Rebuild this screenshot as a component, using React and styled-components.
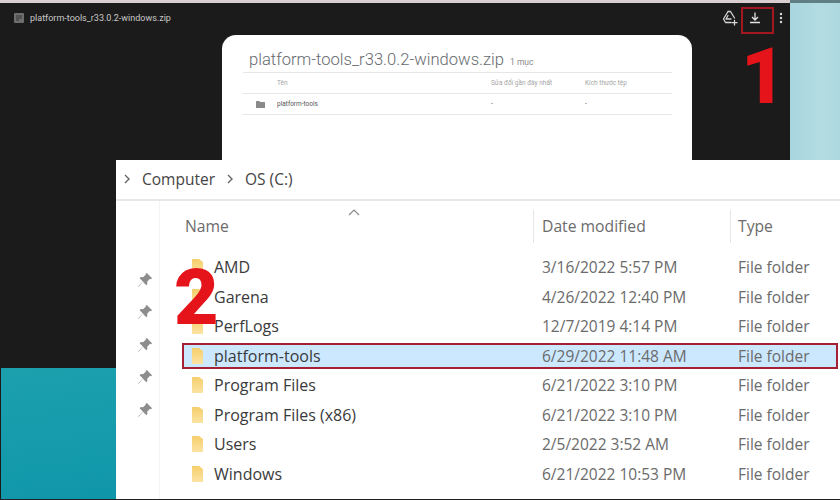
import React from 'react';
import styled, { createGlobalStyle } from 'styled-components';

const GlobalStyle = createGlobalStyle`
  html, body {
    margin: 0;
    padding: 0;
    background: #fff;
  }
`;

const Stage = styled.div`
  position: relative;
  width: 840px;
  height: 500px;
  overflow: hidden;
  display: grid;
  grid-template-columns: 790px 50px;
  grid-template-rows: 368px 131px;
  background: #222;
`;

const Viewer = styled.div`
  background: #1b1b1b;
  border-top: 3px solid #d9cfd0;
  box-sizing: border-box;
  font-family: Roboto, "Liberation Sans", sans-serif;
`;

const SideStrip = styled.div`
  height: 160px;
  box-sizing: border-box;
  border-top: 3px solid #5f7f85;
  background: linear-gradient(90deg, #a8d6df 0%, #b3dbe2 60%, #aed8df 100%);
`;

const Teal = styled.div`
  grid-column: 1 / span 2;
  border-left: 1px solid #1b1b1b;
  background: linear-gradient(172deg, #1ca0ae 0%, #1299aa 45%, #0a8ca6 100%);
`;

const TopBar = styled.div`
  height: 30px;
  display: flex;
  align-items: center;
  padding: 0 0 0 14px;
  gap: 6px;
`;

const FileName = styled.span`
  font-size: 9px;
  color: #c9c9c9;
  flex: 1;
`;

const BarIcons = styled.div`
  display: grid;
  grid-template-columns: 27px 30px 4px;
  align-items: center;
  padding-right: 7px;
`;

const PreviewCard = styled.div`
  width: 470px;
  height: 125px;
  margin: 2px 0 0 222px;
  box-sizing: border-box;
  padding: 15px 20px 0 21px;
  background: #fff;
  border-radius: 14px 14px 0 0;
`;

const PreviewTitle = styled.div`
  display: flex;
  align-items: baseline;
  gap: 6px;
  padding-left: 6px;
  height: 22px;
  font-size: 16.6px;
  font-weight: 300;
  color: #666a6e;
  white-space: nowrap;
`;

const ItemCount = styled.span`
  font-size: 8.5px;
  color: #8a8a8a;
  font-weight: 400;
`;

const PreviewRow = styled.div`
  display: grid;
  grid-template-columns: 34px 214px 94px 1fr;
  align-items: center;
  height: 20px;
  border-top: 1px solid #e6e6e6;
  font-size: 6.5px;
  color: ${(p) => (p.$head ? '#a5a5a5' : '#555')};
  &:last-child {
    border-bottom: 1px solid #e6e6e6;
  }
`;

const FolderCell = styled.div`
  display: flex;
  padding-left: 13px;
`;

const Explorer = styled.div`
  position: absolute;
  left: 116px;
  top: 160px;
  width: 724px;
  height: 339px;
  background: #fff;
  font-family: "Open Sans", "Noto Sans", sans-serif;
`;

const AddressBar = styled.div`
  height: 37px;
  padding: 0 0 2px 7px;
  display: flex;
  align-items: center;
  gap: 11px;
  border-bottom: 2px solid #e8e8e8;
  font-size: 15.5px;
  color: #444;
`;

const Body = styled.div`
  display: grid;
  grid-template-columns: 44px 1fr;
`;

const PinRail = styled.div`
  display: flex;
  flex-direction: column;
  gap: 14.6px;
  padding: 69.5px 0 0 21px;
  border-right: 1px solid #f4f4f4;
  height: 298px;
  box-sizing: border-box;
`;

const Table = styled.div`
  padding-top: 9px;
`;

const HeadRow = styled.div`
  position: relative;
  display: grid;
  grid-template-columns: 373px 197px 1fr;
  height: 42.5px;
  font-size: 15.7px;
  color: #6b6b6b;
`;

const HeadCell = styled.div`
  padding: 4px 0 0 ${(p) => p.$pad}px;
  height: 33px;
  box-sizing: border-box;
  border-left: ${(p) => (p.$first ? 'none' : '1px solid #e6e6e6')};
  line-height: 24px;
`;

const SortArrow = styled.svg`
  position: absolute;
  left: 188px;
  top: -1px;
`;

const Row = styled.div`
  display: grid;
  grid-template-columns: 355px 196px 1fr;
  align-items: center;
  height: ${(p) => (p.$selected ? '26.5px' : '29.5px')};
  margin: ${(p) => (p.$selected ? '1.5px' : '0')} 2px ${(p) => (p.$selected ? '1.5px' : '0')} 22px;
  font-size: 15.5px;
  color: #6b6b6b;
  box-sizing: border-box;
  background: ${(p) => (p.$selected ? '#cce8ff' : 'transparent')};
  outline: ${(p) => (p.$selected ? '2px solid #a51f35' : 'none')};
  outline-offset: -2px;
`;

const NameCell = styled.div`
  display: flex;
  align-items: center;
  gap: 10px;
  padding-left: 9px;
  font-size: 16px;
  color: #3a3a3a;
`;

const DataCell = styled.div`
  padding-left: 5px;
`;

const Callout = styled.div`
  position: absolute;
  font-family: Roboto, "Liberation Sans", sans-serif;
  font-weight: 900;
  font-size: 77px;
  line-height: 77px;
  color: #e5141b;
  left: ${(p) => p.$x}px;
  top: ${(p) => p.$y}px;
`;

const DownloadMark = styled.div`
  position: absolute;
  left: 741px;
  top: 7px;
  width: 33px;
  height: 27px;
  box-sizing: border-box;
  border: 2px solid #a5171f;
`;

const DriveIcon = () => (
  <svg width="16" height="16" viewBox="0 0 16 16" fill="none" stroke="#d4d4d4" strokeWidth="1.3" strokeLinejoin="round" strokeLinecap="round">
    <path d="M6 1.5h2.5l4 6.5M6 1.5 1.5 9l2 3.5H9" />
    <path d="M6 5.5 4 9h5" />
    <path d="M12.5 10.5v4.5M10 12.7h5" />
  </svg>
);

const DownloadIcon = () => (
  <svg width="12" height="12" viewBox="0 0 12 12" fill="none" stroke="#e4e4e4" strokeWidth="1.3">
    <path d="M6 .5v7M3 5l3 3 3-3M1 10.5h10" />
  </svg>
);

const MoreIcon = () => (
  <svg width="4" height="12" viewBox="0 0 4 12" fill="#d8d8d8">
    <circle cx="2" cy="2" r="1.2" />
    <circle cx="2" cy="6" r="1.2" />
    <circle cx="2" cy="10" r="1.2" />
  </svg>
);

const FileIcon = () => (
  <svg width="10" height="10" viewBox="0 0 10 10">
    <rect width="10" height="10" rx="1" fill="#6e6e6e" />
    <path d="M2 3h6M2 5h6M2 7h3" stroke="#2a2a2a" strokeWidth="0.8" />
  </svg>
);

const SmallFolder = () => (
  <svg width="9" height="7" viewBox="0 0 9 7" fill="#8a8a8a">
    <path d="M0 .6C0 .3.3 0 .6 0h2.6l1 1h4.2c.3 0 .6.3.6.6v4.8c0 .3-.3.6-.6.6H.6C.3 7 0 6.7 0 6.4z" />
  </svg>
);

const Chevron = () => (
  <svg width="8" height="10" viewBox="0 0 8 10" fill="none" stroke="#666" strokeWidth="1.4">
    <path d="M2 1l4 4-4 4" />
  </svg>
);

const Pin = () => (
  <svg width="16" height="18" viewBox="0 0 14 14" fill="#8d8d8d">
    <path d="M8.6.8l4.6 4.6-1 .9-.8-.3-2.5 2.5.2 2-1 1-2.9-2.9L1.4 13 .9 12.6l4.3-4.3L2.3 5.4l1-1 2 .2 2.5-2.5-.2-.8z" />
  </svg>
);

const YellowFolder = () => (
  <svg width="13" height="18" viewBox="0 0 13 18">
    <defs>
      <linearGradient id="fold" x1="0" y1="0" x2="0" y2="1">
        <stop offset="0" stopColor="#f6cf6c" />
        <stop offset="1" stopColor="#fbe3a2" />
      </linearGradient>
    </defs>
    <path d="M1 1h7l4 3v13H1z" fill="url(#fold)" />
  </svg>
);

const FOLDERS = [
  { name: 'AMD', date: '3/16/2022 5:57 PM' },
  { name: 'Garena', date: '4/26/2022 12:40 PM' },
  { name: 'PerfLogs', date: '12/7/2019 4:14 PM' },
  { name: 'platform-tools', date: '6/29/2022 11:48 AM', selected: true },
  { name: 'Program Files', date: '6/21/2022 3:10 PM' },
  { name: 'Program Files (x86)', date: '6/21/2022 3:10 PM' },
  { name: 'Users', date: '2/5/2022 3:52 AM' },
  { name: 'Windows', date: '6/21/2022 10:53 PM' },
];

const App = () => (
  <>
    <GlobalStyle />
    <Stage>
      <Viewer>
        <TopBar>
          <FileIcon />
          <FileName>platform-tools_r33.0.2-windows.zip</FileName>
          <BarIcons>
            <DriveIcon />
            <DownloadIcon />
            <MoreIcon />
          </BarIcons>
        </TopBar>
        <PreviewCard>
          <PreviewTitle>
            platform-tools_r33.0.2-windows.zip
            <ItemCount>1 mục</ItemCount>
          </PreviewTitle>
          <PreviewRow $head>
            <span />
            <span>Tên</span>
            <span>Sửa đổi gần đây nhất</span>
            <span>Kích thước tệp</span>
          </PreviewRow>
          <PreviewRow>
            <FolderCell>
              <SmallFolder />
            </FolderCell>
            <span>platform-tools</span>
            <span>-</span>
            <span>-</span>
          </PreviewRow>
        </PreviewCard>
      </Viewer>
      <SideStrip />
      <Teal />
      <DownloadMark />
      <Explorer>
        <AddressBar>
          <Chevron />
          <span>Computer</span>
          <Chevron />
          <span>OS (C:)</span>
        </AddressBar>
        <Body>
          <PinRail>
            <Pin />
            <Pin />
            <Pin />
            <Pin />
            <Pin />
          </PinRail>
          <Table>
            <HeadRow>
              <SortArrow width="12" height="7" viewBox="0 0 12 7" fill="none" stroke="#888" strokeWidth="1.2">
                <path d="M1 6l5-5 5 5" />
              </SortArrow>
              <HeadCell $first $pad={25}>Name</HeadCell>
              <HeadCell $pad={8}>Date modified</HeadCell>
              <HeadCell $pad={7}>Type</HeadCell>
            </HeadRow>
            {FOLDERS.map((f) => (
              <Row key={f.name} $selected={f.selected}>
                <NameCell>
                  <YellowFolder />
                  {f.name}
                </NameCell>
                <DataCell>{f.date}</DataCell>
                <DataCell>File folder</DataCell>
              </Row>
            ))}
          </Table>
        </Body>
      </Explorer>
      <Callout $x={741} $y={39}>1</Callout>
      <Callout $x={174} $y={260}>2</Callout>
    </Stage>
  </>
);

export default App;
